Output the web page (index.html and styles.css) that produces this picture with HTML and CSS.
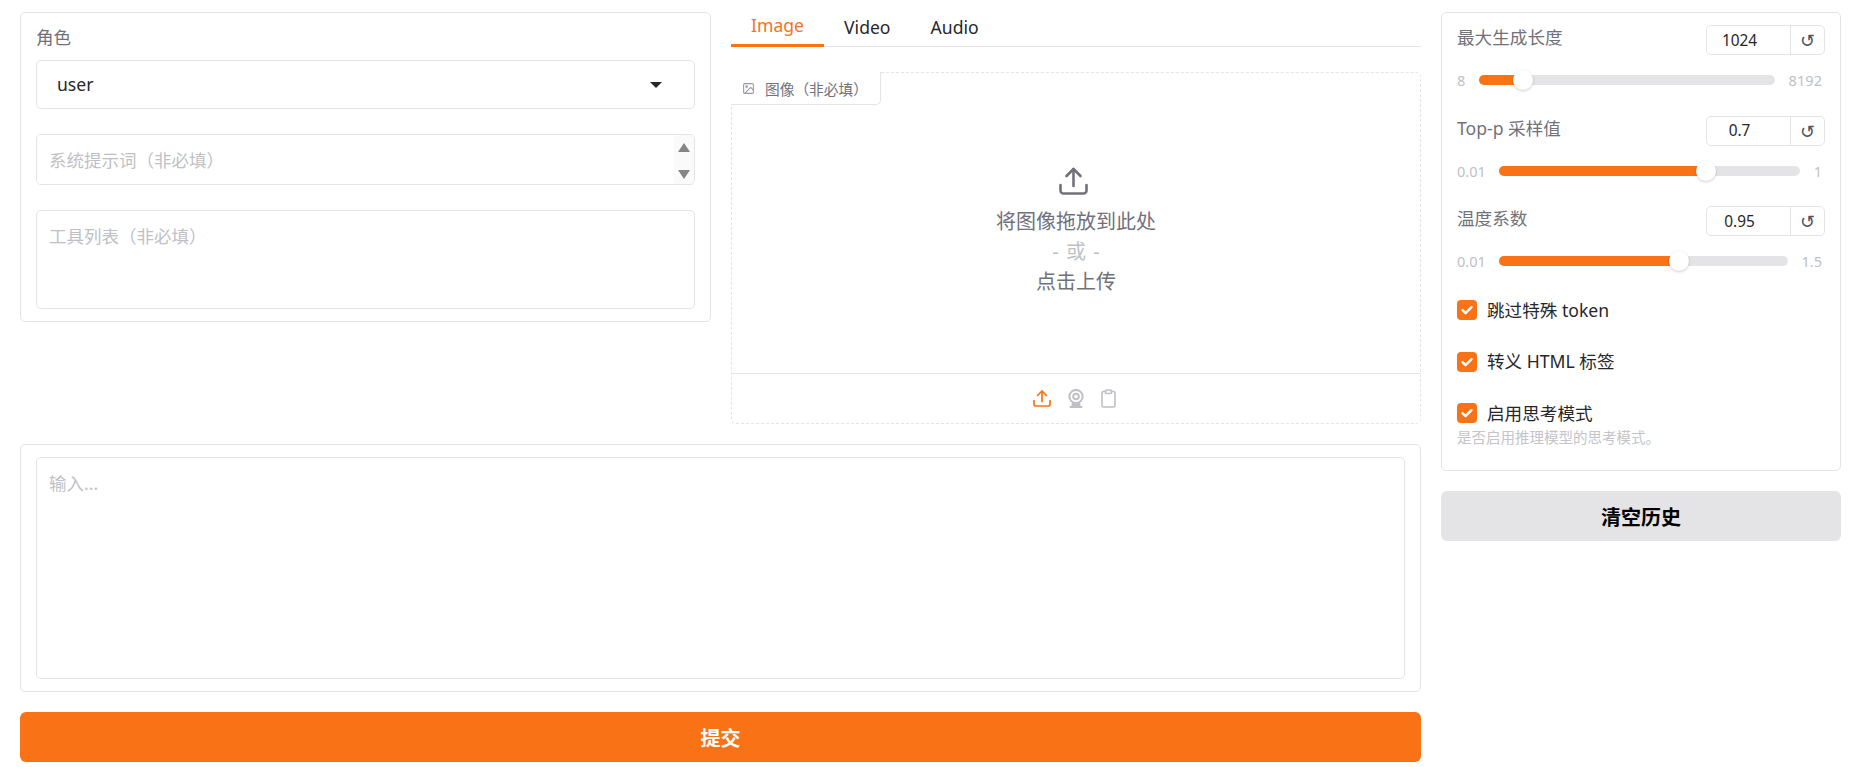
FILE: index.html
```html
<!doctype html>
<html lang="zh-CN">
  <head>
    <meta charset="UTF-8" />
    <meta name="viewport" content="width=device-width, initial-scale=1.0" />
    <title>Chat</title>
    <link rel="stylesheet" href="styles.css">
  </head>
  <body>
    <div class="layout">
      <div class="main">
        <div class="top-row">
          <div class="card role-card">
            <div class="field-label">角色</div>
            <div class="dropdown">
              <span>user</span>
              <span class="dropdown-arrow"></span>
            </div>
            <div class="system-box">
              <input class="plain-input" type="text" placeholder="系统提示词（非必填）" />
              <div class="scroll-strip">
                <span class="arrow-up"></span>
                <span class="arrow-down"></span>
              </div>
            </div>
            <textarea class="tools-input" placeholder="工具列表（非必填）"></textarea>
          </div>

          <div class="media-col">
            <div class="tabs">
              <button class="tab active">Image</button>
              <button class="tab">Video</button>
              <button class="tab">Audio</button>
            </div>
            <div class="upload-box">
              <div class="upload-label">
                <svg class="label-icon" viewBox="0 0 24 24" fill="none" stroke="currentColor" stroke-width="2" stroke-linecap="round" stroke-linejoin="round">
                  <rect x="3" y="3" width="18" height="18" rx="2"></rect>
                  <circle cx="8.5" cy="8.5" r="1.5"></circle>
                  <path d="M21 15l-5-5L5 21"></path>
                </svg>
                <span>图像（非必填）</span>
              </div>
              <div class="drop-area">
                <svg class="drop-icon" viewBox="0 0 29 28" fill="none" stroke="currentColor" stroke-width="2.6" stroke-linecap="round" stroke-linejoin="round">
                  <path d="M14.5 19V2"></path>
                  <path d="M7.5 9l7-7 7 7"></path>
                  <path d="M1.5 18v5.5a3 3 0 0 0 3 3h20a3 3 0 0 0 3-3V18"></path>
                </svg>
                <div class="drop-text">将图像拖放到此处</div>
                <div class="drop-or">- 或 -</div>
                <div class="drop-text">点击上传</div>
              </div>
              <div class="source-bar">
                <svg class="source-icon upload-on" viewBox="0 0 18 18" fill="none" stroke="currentColor" stroke-width="1.7" stroke-linecap="round" stroke-linejoin="round">
                  <path d="M9 12V1.5"></path>
                  <path d="M4.5 6L9 1.5 13.5 6"></path>
                  <path d="M1 11v3.5a2 2 0 0 0 2 2h12a2 2 0 0 0 2-2V11"></path>
                </svg>
                <svg class="source-icon" viewBox="0 0 18 19" fill="none" stroke="currentColor" stroke-width="2" stroke-linecap="round" stroke-linejoin="round">
                  <circle cx="9" cy="7.5" r="6.6"></circle>
                  <circle cx="9" cy="7.5" r="2.8"></circle>
                  <path d="M6 14.5l-.6 2.5h7.2l-.6-2.5" fill="currentColor"></path>
                  <path d="M3.5 18h11"></path>
                </svg>
                <svg class="source-icon clip" viewBox="0 0 15 19" fill="none" stroke="currentColor" stroke-width="1.6" stroke-linecap="round" stroke-linejoin="round">
                  <path d="M4.5 2.5H2.5a1.5 1.5 0 0 0-1.5 1.5v12.5A1.5 1.5 0 0 0 2.5 18h10a1.5 1.5 0 0 0 1.5-1.5V4a1.5 1.5 0 0 0-1.5-1.5h-2"></path>
                  <rect x="4.5" y="1" width="6" height="3.5" rx="1"></rect>
                </svg>
              </div>
            </div>
          </div>
        </div>

        <div class="card input-card">
          <textarea class="message-input" placeholder="输入..."></textarea>
        </div>

        <button class="submit-button">提交</button>
      </div>

      <div class="side">
        <div class="card settings-card">
          <div class="setting">
            <div class="setting-head">
              <span class="field-label">最大生成长度</span>
              <div class="number-group">
                <input class="number-input" type="text" value="1024" />
                <span class="reset">↺</span>
              </div>
            </div>
            <div class="slider-row">
              <span>8</span>
              <div class="track">
                <div class="fill" style="width: 15%"></div>
                <span class="thumb" style="left: 15%"></span>
              </div>
              <span>8192</span>
            </div>
          </div>

          <div class="setting">
            <div class="setting-head">
              <span class="field-label">Top-p 采样值</span>
              <div class="number-group">
                <input class="number-input" type="text" value="0.7" />
                <span class="reset">↺</span>
              </div>
            </div>
            <div class="slider-row">
              <span>0.01</span>
              <div class="track">
                <div class="fill" style="width: 68.6%"></div>
                <span class="thumb" style="left: 68.6%"></span>
              </div>
              <span>1</span>
            </div>
          </div>

          <div class="setting">
            <div class="setting-head">
              <span class="field-label">温度系数</span>
              <div class="number-group">
                <input class="number-input" type="text" value="0.95" />
                <span class="reset">↺</span>
              </div>
            </div>
            <div class="slider-row">
              <span>0.01</span>
              <div class="track">
                <div class="fill" style="width: 62.4%"></div>
                <span class="thumb" style="left: 62.4%"></span>
              </div>
              <span>1.5</span>
            </div>
          </div>

          <div class="check-list">
            <label class="check-row">
              <svg class="check-box" viewBox="0 0 20 20">
                <rect width="20" height="20" rx="4"></rect>
                <path d="M5.5 10.2l3 3 6-6"></path>
              </svg>
              <span>跳过特殊 token</span>
            </label>
            <label class="check-row">
              <svg class="check-box" viewBox="0 0 20 20">
                <rect width="20" height="20" rx="4"></rect>
                <path d="M5.5 10.2l3 3 6-6"></path>
              </svg>
              <span>转义 HTML 标签</span>
            </label>
            <label class="check-row">
              <svg class="check-box" viewBox="0 0 20 20">
                <rect width="20" height="20" rx="4"></rect>
                <path d="M5.5 10.2l3 3 6-6"></path>
              </svg>
              <span>启用思考模式</span>
            </label>
          </div>
          <div class="hint">是否启用推理模型的思考模式。</div>
        </div>

        <button class="clear-button">清空历史</button>
      </div>
    </div>
  </body>
</html>
```

FILE: styles.css
```css
* {
  box-sizing: border-box;
  margin: 0;
  padding: 0;
  font-family: 'Noto Sans', 'Noto Sans CJK SC', sans-serif;
}

body {
  background-color: #fff;
  color: #27272a;
  padding: 12px 29px 0 20px;
  overflow: hidden;
}

input,
textarea {
  color: #27272a;
  outline: none;
  resize: none;
}

input::placeholder,
textarea::placeholder {
  color: #bfbfc6;
}

.layout {
  display: flex;
  gap: 20px;
}

.main {
  width: 1401px;
  display: flex;
  flex-direction: column;
}

.side {
  width: 400px;
  display: flex;
  flex-direction: column;
  gap: 20px;
}

.card {
  background-color: #fff;
  border: 1px solid #e4e4e7;
  border-radius: 5px;
}

.top-row {
  display: flex;
  align-items: flex-start;
  gap: 20px;
  height: 412px;
}

.field-label {
  font-size: 17.6px;
  line-height: 24px;
  color: #71717a;
}

/* left column */
.role-card {
  width: 691px;
  height: 310px;
  padding: 12px 15px;
}

.dropdown {
  display: flex;
  justify-content: space-between;
  align-items: center;
  height: 49px;
  margin-top: 11px;
  padding: 0 32px 2px 20px;
  border: 1px solid #e4e4e7;
  border-radius: 5px;
  font-size: 17.6px;
}

.dropdown-arrow {
  width: 0;
  height: 0;
  margin-top: 2px;
  border-left: 6px solid transparent;
  border-right: 6px solid transparent;
  border-top: 6px solid #27272a;
}

.system-box {
  display: flex;
  height: 51px;
  margin-top: 25px;
  border: 1px solid #e4e4e7;
  border-radius: 5px;
  overflow: hidden;
}

.plain-input {
  flex: 1;
  border: none;
  padding: 0 12px;
  font-size: 17.5px;
}

.scroll-strip {
  width: 20px;
  display: flex;
  flex-direction: column;
  justify-content: space-between;
  align-items: center;
  padding: 8px 0 5px;
  background-color: #fafafa;
}

.arrow-up {
  width: 0;
  height: 0;
  border-left: 6.5px solid transparent;
  border-right: 6.5px solid transparent;
  border-bottom: 9px solid #858585;
}

.arrow-down {
  width: 0;
  height: 0;
  border-left: 6.5px solid transparent;
  border-right: 6.5px solid transparent;
  border-top: 9px solid #858585;
}

.tools-input {
  display: block;
  width: 100%;
  height: 99px;
  margin-top: 25px;
  padding: 13px 12px;
  border: 1px solid #e4e4e7;
  border-radius: 5px;
  font-size: 17.5px;
  line-height: 24px;
}

/* media column */
.media-col {
  width: 690px;
}

.tabs {
  display: flex;
  height: 35px;
  border-bottom: 1px solid #e4e4e7;
}

.tab {
  height: 35px;
  padding: 0 20px 6px;
  background: none;
  border: none;
  font-size: 17.6px;
  color: #27272a;
}

.tab.active {
  color: #f97316;
  border-bottom: 3px solid #f97316;
}

.upload-box {
  position: relative;
  display: flex;
  flex-direction: column;
  height: 352px;
  margin-top: 25px;
  border: 1px dashed #e4e4e7;
  border-radius: 5px;
}

.upload-label {
  position: absolute;
  top: -1px;
  left: -1px;
  display: flex;
  align-items: center;
  gap: 10px;
  width: 150px;
  height: 33px;
  padding-left: 11px;
  background-color: #fff;
  border-right: 1px solid #e4e4e7;
  border-bottom: 1px solid #e4e4e7;
  border-radius: 0 0 5px 0;
  font-size: 14.7px;
  color: #71717a;
}

.label-icon {
  width: 13px;
  height: 13px;
  color: #9a9aa2;
}

.drop-area {
  flex: 1;
  display: flex;
  flex-direction: column;
  align-items: center;
  padding-top: 94px;
  color: #71717a;
}

.drop-icon {
  width: 29px;
  height: 28px;
  margin-left: -5px;
  margin-bottom: 12px;
}

.drop-text {
  font-size: 20px;
  line-height: 30px;
}

.drop-or {
  font-size: 20px;
  line-height: 30px;
  word-spacing: 2px;
  color: #bfbfc6;
}

.source-bar {
  display: flex;
  justify-content: center;
  align-items: center;
  gap: 16px;
  height: 50px;
  border-top: 1px solid #e4e4e7;
  padding-right: 4px;
}

.source-icon {
  width: 18px;
  height: 19px;
  color: #bfbfc6;
}

.source-icon.upload-on {
  color: #f97316;
}

.source-icon.clip {
  width: 15px;
}

/* message box */
.input-card {
  height: 248px;
  margin-top: 20px;
  padding: 12px 15px;
}

.message-input {
  display: block;
  width: 100%;
  height: 100%;
  padding: 13px 12px;
  border: 1px solid #e4e4e7;
  border-radius: 5px;
  font-size: 17.5px;
  line-height: 24px;
}

.submit-button {
  height: 50px;
  margin-top: 20px;
  background-color: #f97316;
  border: none;
  border-radius: 6px;
  color: #fff;
  font-size: 20px;
  font-weight: bold;
}

/* settings */
.settings-card {
  height: 459px;
  padding: 12px 15px 0;
}

.setting {
  margin-bottom: 25.5px;
}

.setting-head {
  display: flex;
  justify-content: space-between;
  align-items: flex-start;
  height: 30px;
}

.number-group {
  display: flex;
  width: 119px;
  height: 30px;
  border: 1px solid #e4e4e7;
  border-radius: 5px;
}

.number-input {
  width: 84px;
  padding-right: 18px;
  border: none;
  border-right: 1px solid #e4e4e7;
  border-radius: 5px 0 0 5px;
  text-align: center;
  font-size: 15.4px;
}

.reset {
  flex: 1;
  text-align: center;
  font-size: 18px;
  line-height: 28px;
  color: #52525b;
}

.slider-row {
  display: flex;
  align-items: center;
  gap: 13.5px;
  height: 20px;
  margin-top: 15px;
  padding-right: 3px;
  font-size: 14.6px;
  color: #bfbfc6;
}

.track {
  position: relative;
  flex: 1;
  height: 10px;
  background-color: #e4e4e7;
  border-radius: 5px;
}

.fill {
  height: 100%;
  background-color: #f97316;
  border-radius: 5px;
}

.thumb {
  position: absolute;
  top: -5px;
  width: 20px;
  height: 20px;
  margin-left: -10px;
  background-color: #fff;
  border-radius: 50%;
  box-shadow: 0 1px 3px rgba(0, 0, 0, 0.2);
}

.check-list {
  display: flex;
  flex-direction: column;
  gap: 31.5px;
  margin-top: 29px;
}

.check-row {
  display: flex;
  align-items: center;
  gap: 10px;
  height: 20px;
  font-size: 17.6px;
}

.check-row span {
  margin-top: -2px;
}

.check-box {
  width: 20px;
  height: 20px;
}

.check-box rect {
  fill: #f97316;
}

.check-box path {
  fill: none;
  stroke: #fff;
  stroke-width: 2.4;
  stroke-linecap: round;
  stroke-linejoin: round;
}

.hint {
  margin-top: 4px;
  font-size: 14.5px;
  line-height: 20px;
  color: #c4c4ca;
}

.clear-button {
  height: 50px;
  background-color: #e4e4e7;
  border: none;
  border-radius: 6px;
  color: #000;
  font-size: 20px;
  font-weight: bold;
}
```
